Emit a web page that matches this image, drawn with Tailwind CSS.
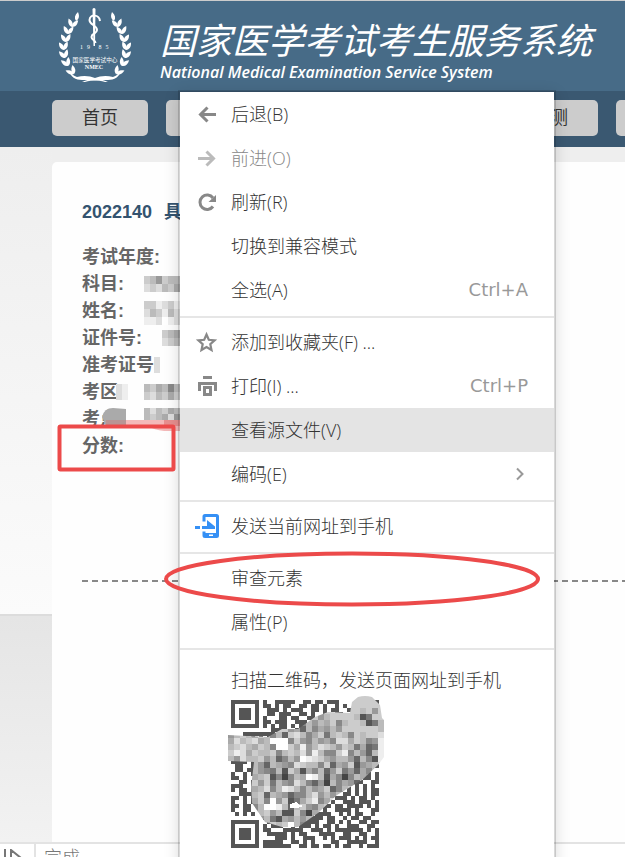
<!DOCTYPE html>
<html lang="zh-CN">
<head>
<meta charset="utf-8">
<meta name="viewport" content="width=device-width, initial-scale=1">
<title>国家医学考试考生服务系统</title>
<script src="https://cdn.jsdelivr.net/npm/@tailwindcss/browser@4"></script>
</head>
<body class="relative flex h-screen flex-col overflow-hidden bg-white font-['Liberation_Sans','Noto_Sans_CJK_SC',sans-serif] text-lg text-[#333]">

<header class="flex h-[91px] shrink-0 border-t border-[#ccc] bg-[#476b87] pl-[50px] text-white">
  <svg class="-mt-px h-[90px] w-[90px] shrink-0" viewBox="0 0 90 90" fill="#fff" role="img" aria-label="NMEC 1985">
    <defs>
      <path id="leaf" d="M0 0C-3-2-3.400-5-1.500-9C1.500-6 2.300-3 0 0Z"/>
      <g id="branch">
        <use href="#leaf" transform="translate(24 21) rotate(22)"/>
        <use href="#leaf" transform="translate(20 27) rotate(-12)"/><use href="#leaf" transform="translate(20 27) rotate(52)"/>
        <use href="#leaf" transform="translate(16 34) rotate(-18)"/><use href="#leaf" transform="translate(16 34) rotate(46)"/>
        <use href="#leaf" transform="translate(14 42) rotate(-24)"/><use href="#leaf" transform="translate(14 42) rotate(38)"/>
        <use href="#leaf" transform="translate(12 50) rotate(-24)"/><use href="#leaf" transform="translate(12 50) rotate(32)"/>
        <use href="#leaf" transform="translate(13 58) rotate(-32)"/><use href="#leaf" transform="translate(13 58) rotate(24)"/>
        <use href="#leaf" transform="translate(16 66) rotate(-42)"/><use href="#leaf" transform="translate(16 66) rotate(12)"/>
        <use href="#leaf" transform="translate(22 74) rotate(-58)"/><use href="#leaf" transform="translate(22 74) rotate(0)"/>
        <path d="M17 70Q19 75 25 77C32 75 38 76 43 78C48 79 52 80 56 82L53 82C46 80 36 80 30 80C24 80 18 77 17 70Z"/>
      </g>
    </defs>
    <use href="#branch" transform="translate(2 0)"/>
    <use href="#branch" transform="translate(88 0) scale(-1 1)"/>
    <path d="M42.500 9Q44 7 45.500 9L45 46H43.500Z"/>
    <path d="M50 21C49 14 40 14 39.500 20C39.500 25 47 25 47 30C47 34 41.500 33 41.500 37C41.500 40 45.500 40 45.500 43" fill="none" stroke="#fff" stroke-width="2"/>
    <g text-anchor="middle" font-family="'Liberation Serif',serif" font-size="6">
      <text x="31.500" y="49">1</text><text x="38.500" y="49">9</text><text x="50" y="49">8</text><text x="57" y="49">5</text>
      <text x="44" y="68.500" font-weight="bold">NMEC</text>
      <text x="45" y="61.500" font-size="5.600" font-family="'Noto Sans CJK SC',sans-serif">国家医学考试中心</text>
    </g>
  </svg>
  <div class="pt-[19px] pl-[20px] italic whitespace-nowrap">
    <h1 class="text-4xl leading-[44px]">国家医学考试考生服务系统</h1>
    <p class="font-['Open_Sans'] text-base leading-[16px] font-semibold">National Medical Examination Service System</p>
  </div>
</header>

<nav class="flex h-14 shrink-0 gap-[18px] overflow-hidden bg-[#3a5871] pt-[9px] pl-[52px] leading-9 whitespace-nowrap">
  <a href="#" class="h-9 shrink-0 rounded-[5px] bg-[#ccc] px-[30px]">首页</a>
  <a href="#" class="h-9 shrink-0 rounded-[5px] bg-[#ccc] px-[30px]">考试报名</a>
  <a href="#" class="h-9 shrink-0 rounded-[5px] bg-[#ccc] px-[30px]">成绩查询</a>
  <a href="#" class="h-9 shrink-0 rounded-[5px] bg-[#ccc] px-[30px]">在线评测</a>
  <a href="#" aria-label="更多" class="h-9 w-24 shrink-0 rounded-[5px] bg-[#ccc]"></a>
</nav>

<main class="flex min-h-0 flex-1">
  <div class="flex w-[52px] shrink-0 flex-col">
    <div class="h-[467px] bg-linear-to-b from-[#eee] to-[#fbfbfb]"></div>
    <div class="flex-1 border-t-2 border-[#dcdcdc] bg-linear-to-b from-[#e5e5e5] to-[#f2f2f2]"></div>
  </div>
  <div class="min-w-0 flex-1 bg-[#eee] pt-[15px]">
    <section class="relative h-full rounded-tl-[5px] bg-[#fefefe] pt-[37px] pl-[30px]">
      <h2 class="flex gap-3 leading-[27px] font-bold whitespace-nowrap text-[#34536f]"><span>2022140</span><span>具</span></h2>
      <ul class="mt-[18px] leading-[27px] font-bold text-[#666]">
        <li>考试年度:</li><li>科目:</li><li>姓名:</li><li>证件号:</li>
        <li>准考证号:</li><li>考区:</li><li>考点:</li><li>分数:</li>
      </ul>
      <svg class="absolute top-[108px] left-[48px]" width="92" height="162" viewBox="100 270 92 162" aria-hidden="true">
        <g id="tiles"></g>
        <path d="M102 417Q104 408 113 408L126 409V426H106Z" fill="#aaa"/>
        <path d="M106 420H180V431H164Q154 430 148 426H106Z" fill="#f4b9b9"/>
        <path d="M106 420H126V426H106Z" fill="#b99494"/>
        <path d="M164 420H180V426H164Z" fill="#e88f8f"/>
      </svg>
      <div class="mt-[120px] h-[2px] bg-[repeating-linear-gradient(90deg,#888_0_6px,transparent_6px_10px)]"></div>
    </section>
  </div>
</main>

<footer class="flex h-[15px] shrink-0 overflow-hidden border-t-2 border-[#e3e3e3] bg-white leading-7 text-[#777]">
  <div class="h-4 w-9 shrink-0 border-r-2 border-[#e3e3e3]">
    <svg class="mt-[5px]" width="34" height="20" viewBox="0 0 34 20" fill="none" stroke="#777" stroke-width="2"><path d="M5 0V18M11 1V17L21 9Z"/></svg>
  </div>
  <span class="pl-2 font-light">完成</span>
</footer>

<div role="menu" class="absolute top-[90px] left-[178px] h-[800px] w-[378px] border-2 border-black/15 bg-white bg-clip-padding font-['Open_Sans','Noto_Sans_CJK_SC',sans-serif] font-light shadow-[0_4px_14px_rgba(0,0,0,0.14)]">
  <button role="menuitem" class="flex h-11 w-full items-center pl-[15px]">
    <svg class="mr-3 size-6" viewBox="0 0 24 24" fill="none" stroke="#888" stroke-width="3"><path d="M21 12.500H6M12.500 5.500L5.500 12.500L12.500 19.500"/></svg>后退(B)</button>
  <button role="menuitem" class="flex h-11 w-full items-center pl-[15px] text-[#888]">
    <svg class="mr-3 size-6" viewBox="0 0 24 24" fill="none" stroke="#bbb" stroke-width="3"><path d="M3 12.500H18M11.500 5.500L18.500 12.500L11.500 19.500"/></svg>前进(O)</button>
  <button role="menuitem" class="flex h-11 w-full items-center pl-[15px]">
    <svg class="mr-3 size-6" viewBox="0 0 24 24" fill="none" stroke="#888" stroke-width="3"><path d="M18 16.500A7.200 7.200 0 1 1 18 8"/><path d="M21 5V12H13.500Z" fill="#888" stroke="none"/></svg>刷新(R)</button>
  <button role="menuitem" class="flex h-11 w-full items-center pl-[51px]">切换到兼容模式</button>
  <button role="menuitem" class="flex h-11 w-full items-center justify-between pr-[26px] pl-[51px]">全选(A)<kbd class="font-['DejaVu_Sans'] font-normal text-[#999]">Ctrl+A</kbd></button>
  <hr class="mt-1 mb-[2px] border-t-2 border-[#e6e6e6]">
  <button role="menuitem" class="flex h-11 w-full items-center pl-[15px]">
    <svg class="mr-3 size-6" viewBox="0 0 24 24" fill="none" stroke="#888" stroke-width="2.200"><path d="M11.500 4.500L13.800 9.800L19.600 10.400L15.300 14.200L16.500 20L11.500 17L6.500 20L7.700 14.200L3.400 10.400L9.200 9.800Z"/></svg>添加到收藏夹(F) ...</button>
  <button role="menuitem" class="flex h-11 w-full items-center justify-between pr-[26px] pl-[15px]"><span class="flex items-center">
    <svg class="mr-3 size-6" viewBox="0 0 24 24" fill="none" stroke="#888" stroke-width="3"><path d="M8 3.500H17"/><path d="M4.500 17V9.500H20.500V17"/><path d="M9.500 13.500H15.500V20.500H9.500Z"/></svg>打印(I) ...</span><kbd class="font-['DejaVu_Sans'] font-normal text-[#999]">Ctrl+P</kbd></button>
  <button role="menuitem" class="flex h-11 w-full items-center bg-[#e4e4e4] pl-[51px]">查看源文件(V)</button>
  <button role="menuitem" class="flex h-11 w-full items-center justify-between pr-[26px] pl-[51px]">编码(E)
    <svg width="16" height="16" viewBox="0 0 16 16" fill="none" stroke="#999" stroke-width="2"><path d="M5 2.500L10.500 8L5 13.500"/></svg></button>
  <hr class="mt-1 mb-[2px] border-t-2 border-[#e6e6e6]">
  <button role="menuitem" class="flex h-11 w-full items-center pl-[15px]">
    <svg class="mr-3 size-6" viewBox="0 0 24 24"><path d="M9 7.500V2.500Q9 1.500 10 1.500H21.500Q22.500 1.500 22.500 2.500V21.500Q22.500 22.500 21.500 22.500H10Q9 22.500 9 21.500V17.500" fill="none" stroke="#3590f5" stroke-width="3"/><path d="M8 19H23V23H8ZM12 6L20 12.500V15H7V12H12ZM0 12H5V15H0Z" fill="#3590f5"/><path d="M14 20.500H18V22H14Z" fill="#fff"/></svg>发送当前网址到手机</button>
  <hr class="mt-1 mb-[2px] border-t-2 border-[#e6e6e6]">
  <button role="menuitem" class="flex h-11 w-full items-center pl-[51px]">审查元素</button>
  <button role="menuitem" class="flex h-11 w-full items-center pl-[51px]">属性(P)</button>
  <hr class="mt-1 mb-[2px] border-t-2 border-[#e6e6e6]">
  <div class="pt-[14px] pl-[48px]">
    <p class="pl-[3px] leading-7">扫描二维码，发送页面网址到手机</p>
    <svg class="mt-[2px]" width="156" height="152" viewBox="0 0 156 152" role="img" aria-label="二维码" shape-rendering="crispEdges">
      <defs><clipPath id="blob"><path d="M130 1Q137-1 144 1L152 9L154 22L156 24V61L150 69L134 84L109 99L90 117L70 131H54L37 126L24 107L23 91L26 66L0 65V39L40 41L54 33H70L87 21L100 16L122 17L124 6Z"/></clipPath></defs>
      <g id="qr" fill="#555"></g>
      <g id="mosaic" clip-path="url(#blob)"></g>
      <path d="M62 108L68 106L70 108L75 110L70 112H62Z" fill="#fff"/>
    </svg>
  </div>
</div>

<svg class="pointer-events-none absolute top-0 left-0" width="560" height="640" fill="none" stroke="#ec4a4a" stroke-width="4" aria-hidden="true">
  <rect x="59.500" y="426.500" width="114" height="43" rx="1"/>
  <ellipse cx="352" cy="579" rx="186" ry="25.500"/>
</svg>

<script>
const NS = 'http://www.w3.org/2000/svg';
function cell(parent, x, y, w, h, fill) {
  const r = document.createElementNS(NS, 'rect');
  r.setAttribute('x', x); r.setAttribute('y', y);
  r.setAttribute('width', w); r.setAttribute('height', h);
  if (fill) r.setAttribute('fill', fill);
  parent.appendChild(r);
}
// QR modules, 4px each
const modules = [
'1111111.1..11111..11.11.111....111111',
'1000001.11.1.11..11.11.1..1.1...11111',
'1011101..111.1.111..11.1.11..1..11111',
'1011101..11.111..11.1..1..11....11111',
'1011101.1...11.11..11.1...1.11.111111',
'1000001.11.111..111.1.1.1.1..11.11111',
'1111111.1.1.11.1.11.1.1.1.1.1.1.11111',
'..........1111..11.1..1111..11.111111',
'...11111111..1.11.1.1.1.1.1.1.1..1111',
'11.1.1.1.11.1..11.1..11.1..1.11.1.11.',
'.1.11.1.1.1.1.11..1.11..1.1..1.11.1.1',
'1.11..11.1..1.1.1.11..1.1.11.1..1.1..',
'11.1.11..1.11..1.1.1.1.1..1.11.1111.1',
'..1..1.11.1.1.11.1.11..1.11.1..111.1.',
'1.11.1..1.1.1..1.1.1.1.1.1.11.1.1.111',
'1111.11.1.1..11.1.1.1..1.1..1.11.1.11',
'.11..1.1.1.11.1..11.1.1.1.1.1.1..1..1',
'.11.11.111.1..1.1.1.1.11..1.1..1.1...',
'1..1.11.1.1.11.1.1..1.1.11.1.111.11.1',
'11.1..1.11.1.1.1.11.1.1..1.1.11..11.1',
'..11.1..11.1.11..1.1.1.11.1.11.11..11',
'111..11.11.1..1.11.1.1..1.1.11.1.1.1.',
'1.11.11.11.1.1.111.11.11.111.1.1.1.11',
'..1111.1111.1.1.1.1..111.1..11.1.1.11',
'11.1.1111.1.11111.11.1.1..111.1.11.1.',
'1..1.1.1..11.11.111.11.1.1..111.111.1',
'11.11..1.1111.111111.1111.11.1111.1.1',
'1..11..1.1.11.1.111111.1..1111.1...11',
'.1.1.1..11.11111.1.1.1111..1.1.11..1.',
'........11.1111.1..1111.11..1.11.11..',
'1111111..111...1111111..11.1.1..11.11',
'1000001.1.111..1.111.1.11.1..111..11.',
'1011101.11...11111..111.1.1111111.1.1',
'1011101..11111.1.11...1111..11..11..1',
'1011101....111.1..111..1.1.111.1.1.11',
'1000001.11111..11.1.1....11..11111..1',
'1111111.1111111..11.11.11.1.11..1.111'];
const qr = document.getElementById('qr');
modules.forEach((row, y) => [...row].forEach((m, x) => { if (m === '1') cell(qr, 3 + x * 4, 4 + y * 4, 4, 4); }));

// grey redaction cells, 6px each, hex brightness
const greys = [
'cccccccccccccccccccccccccc','cccccccccccccccccccccccccc','ccccccccccccccccccccccbc9c','cccccccccccacbc9bccccb57cc',
'cccccccccccc8b9bac8bccb57b','cccccccccc9a6b8a9b9ccccccb','9bcbacb8b6cdb8ac7bcb8cbccd','adbcdabfff8c98b9a8ddacb89e',
'bcdbacb8ffcae9bdcb9cb7a67e','cedacbbc8bcbd9eb88ce8b96be','b9dbbc9b68b9fedca9bb96b85e','aabcb96ba98dcbb8c6a9c59abd',
'aaaab987b5ca5a8b69c796a8b9','aaaaabc5848bafeb5a848ba978','aaaac9c7b98db8694b8a96b8aa','aaaaabd8bedb8b9ac68bca9aaa',
'aaaabc6ba9688bd9b9bc8aaaaa','aaaaac8f9c57ace8adbaaaaaaa','aaaa8bffeb6bc98bcbaaaaaaaa','aaaa9bc9b55c84abdaaaaaaaaa',
'aaaa79b75a9b9bb9aaaaaaaaaa','aaaaabacbcfb8aaaaaaaaaaaaa'];
const mosaic = document.getElementById('mosaic');
greys.forEach((row, y) => [...row].forEach((g, x) => cell(mosaic, x * 6, y * 6, 6, 6, '#' + g + g + g)));

// redacted values beside the labels: x, y, brightness of each 6px column
const tiles = document.getElementById('tiles');
[[144,276,'cb9cbb'],[144,284,'dcdbca'],[144,301,'ccedce'],[144,309,'dbcebd'],[144,317,'eedfed'],
 [162,330,'cba'],[162,338,'dcb'],[154,357,'d'],[154,365,'d'],[116,384,'de'],[116,392,'de'],
 [144,384,'bcab8b'],[144,392,'cdbcac'],[144,408,'bdbcab'],[144,414,'bcbad9']
].forEach(([x, y, row]) => [...row].forEach((g, i) => cell(tiles, x + i * 6, y, 6, 8, '#' + g + g + g)));
</script>
</body>
</html>
